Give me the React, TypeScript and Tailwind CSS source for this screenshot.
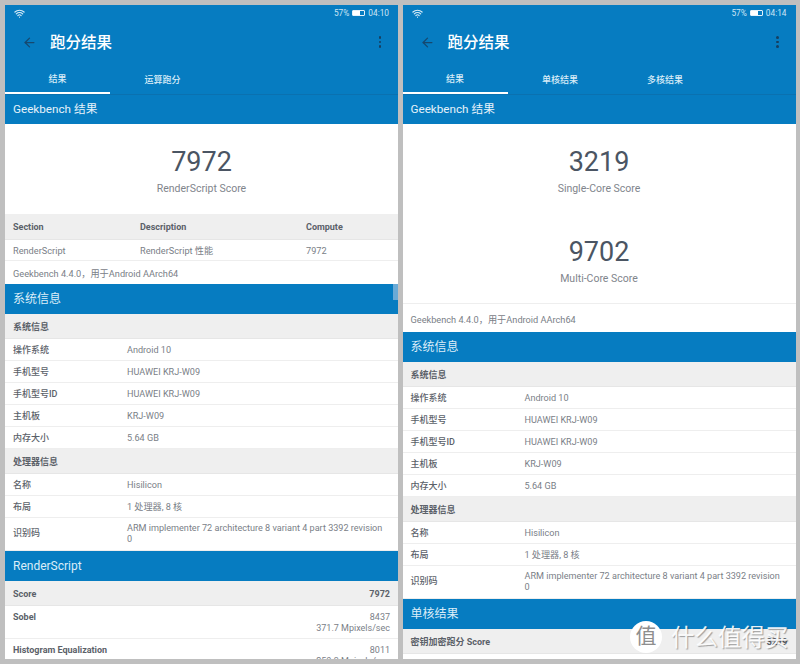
import { ArrowLeft, Wifi } from 'lucide-react';

function AppBar({ time, tabs }: { time: string; tabs: string[] }) {
  return (
    <div className="bg-[#067cc1] text-white">
      <div className="flex h-[20px] items-center justify-between px-[9px] pb-[4px]">
        <Wifi size={11} strokeWidth={2.5} className="text-[#d8ecf8]" />
        <div className="flex items-center gap-[3px] text-[8.3px] text-[#cfe6f5]">
          <span>57%</span>
          <span className="flex h-[6px] w-[13px] rounded-[1px] border border-[#e4f1fa]">
            <span className="w-[7px] bg-white" />
          </span>
          <span>{time}</span>
        </div>
      </div>
      <div className="flex h-[34px] items-center pl-[17px] pr-[17px]">
        <ArrowLeft size={15} strokeWidth={2} className="text-[#16486f]" />
        <span className="ml-[13px] pt-[3px] text-[15.5px] font-medium">跑分结果</span>
        <div className="ml-auto flex flex-col gap-[2px]">
          <span className="size-[2.5px] rounded-full bg-[#163f60]" />
          <span className="size-[2.5px] rounded-full bg-[#163f60]" />
          <span className="size-[2.5px] rounded-full bg-[#163f60]" />
        </div>
      </div>
      <div className="flex h-[36px] border-b border-[#0a71b0]">
        {tabs.map((t, i) => (
          <div
            key={t}
            className={`flex w-[105px] items-center justify-center pt-[8px] text-[9px] font-medium text-[#d9ecf8] ${i === 0 ? 'border-b-2 border-white' : ''}`}
          >
            {t}
          </div>
        ))}
      </div>
      <div className="flex h-[29px] items-center px-[8px] text-[11.7px] text-[#e6f2fa]">Geekbench 结果</div>
    </div>
  );
}

function Score({ value, label }: { value: string; label: string }) {
  return (
    <div className="flex flex-col items-center">
      <span className="text-[27px] leading-[32px] text-[#4b5563]">{value}</span>
      <span className="mt-[4px] text-[10.5px] leading-[14px] text-[#7f858c]">{label}</span>
    </div>
  );
}

function Blue({ children }: { children: string }) {
  return <div className="flex h-[30px] items-center bg-[#067cc1] px-[8px] text-[12px] text-[#dcedf8]">{children}</div>;
}

function Group({ children, right }: { children: string; right?: string }) {
  return (
    <div className="flex h-[25px] items-center justify-between border-b border-[#e6e6e6] bg-[#efefef] px-[8px] pt-[3px] text-[9px] font-bold text-[#5b6169]">
      <span>{children}</span>
      {right && <span>{right}</span>}
    </div>
  );
}

function Row({ label, value }: { label: string; value: string }) {
  const tall = value.length > 40;
  return (
    <div className={`flex ${tall ? 'h-[33px]' : 'h-[22px] pt-[2px]'} items-center border-b border-[#eeeeee] bg-white px-[8px] text-[9px]`}>
      <span className="w-[114px] shrink-0 font-medium text-[#5b6169]">{label}</span>
      <span className="max-w-[260px] text-[9.1px] leading-[11px] text-[#7a8087]">{value}</span>
    </div>
  );
}

function SystemInfo() {
  return (
    <>
      <Blue>系统信息</Blue>
      <Group>系统信息</Group>
      <Row label="操作系统" value="Android 10" />
      <Row label="手机型号" value="HUAWEI KRJ-W09" />
      <Row label="手机型号ID" value="HUAWEI KRJ-W09" />
      <Row label="主机板" value="KRJ-W09" />
      <Row label="内存大小" value="5.64 GB" />
      <Group>处理器信息</Group>
      <Row label="名称" value="Hisilicon" />
      <Row label="布局" value="1 处理器, 8 核" />
      <Row label="识别码" value="ARM implementer 72 architecture 8 variant 4 part 3392 revision 0" />
    </>
  );
}

function Bench({ name, score, rate }: { name: string; score: string; rate: string }) {
  return (
    <div className="flex h-[33px] justify-between border-b border-[#eeeeee] px-[8px] pt-[6px] text-[9px] leading-[11px]">
      <span className="font-bold text-[#5b6169]">{name}</span>
      <span className="text-right text-[#7a8087]">
        {score}
        <br />
        {rate}
      </span>
    </div>
  );
}

export default function App() {
  return (
    <div
      className="relative flex h-[664px] w-[800px] gap-[4.5px] overflow-hidden bg-[#bfbfbf] pl-[5px] pt-[5px]"
      style={{ fontFamily: 'Roboto, "Noto Sans CJK SC", sans-serif' }}
    >
      <div className="relative h-[654px] w-[393px] overflow-hidden bg-white">
        <AppBar time="04:10" tabs={['结果', '运算跑分']} />
        <div className="flex h-[90px] flex-col justify-start pt-[22px]">
          <Score value="7972" label="RenderScript Score" />
        </div>
        <div className="flex h-[26px] items-center border-b border-[#e6e6e6] bg-[#efefef] px-[8px] pt-[2px] text-[9px] font-bold text-[#5b6169]">
          <span className="w-[127px]">Section</span>
          <span className="w-[166px]">Description</span>
          <span>Compute</span>
        </div>
        <div className="flex h-[21px] items-center border-b border-[#eeeeee] px-[8px] pt-[2px] text-[9.2px] text-[#7a8087]">
          <span className="w-[127px]">RenderScript</span>
          <span className="w-[166px]">RenderScript 性能</span>
          <span>7972</span>
        </div>
        <div className="flex h-[23px] items-center px-[8px] pt-[2px] text-[9.2px] text-[#7a8087]">Geekbench 4.4.0，用于Android AArch64</div>
        <SystemInfo />
        <Blue>RenderScript</Blue>
        <Group right="7972">Score</Group>
        <Bench name="Sobel" score="8437" rate="371.7 Mpixels/sec" />
        <Bench name="Histogram Equalization" score="8011" rate="250.3 Mpixels/sec" />
        <span className="absolute right-0 top-[279px] h-[16px] w-[5px] bg-[#6aaad6]" />
      </div>

      <div className="h-[654px] w-[393px] overflow-hidden bg-white">
        <AppBar time="04:14" tabs={['结果', '单核结果', '多核结果']} />
        <div className="flex h-[180px] flex-col gap-[40px] border-b border-[#eeeeee] pt-[22px]">
          <Score value="3219" label="Single-Core Score" />
          <Score value="9702" label="Multi-Core Score" />
        </div>
        <div className="flex h-[28px] items-center px-[8px] pt-[3px] text-[9.2px] text-[#7a8087]">Geekbench 4.4.0，用于Android AArch64</div>
        <SystemInfo />
        <Blue>单核结果</Blue>
        <Group right="3219">密钥加密跑分 Score</Group>
      </div>

      {/* watermark */}
      <div className="absolute left-[630px] top-[621px] flex items-center gap-[9px]">
        <span className="flex size-[32px] items-center justify-center rounded-full bg-white text-[21px] text-[#8e8e8e]">值</span>
        <span className="pt-[2px] text-[23.5px] leading-[30px] text-white/90 [text-shadow:1px_1px_1px_rgba(0,0,0,0.35)]">什么值得买</span>
      </div>
    </div>
  );
}
